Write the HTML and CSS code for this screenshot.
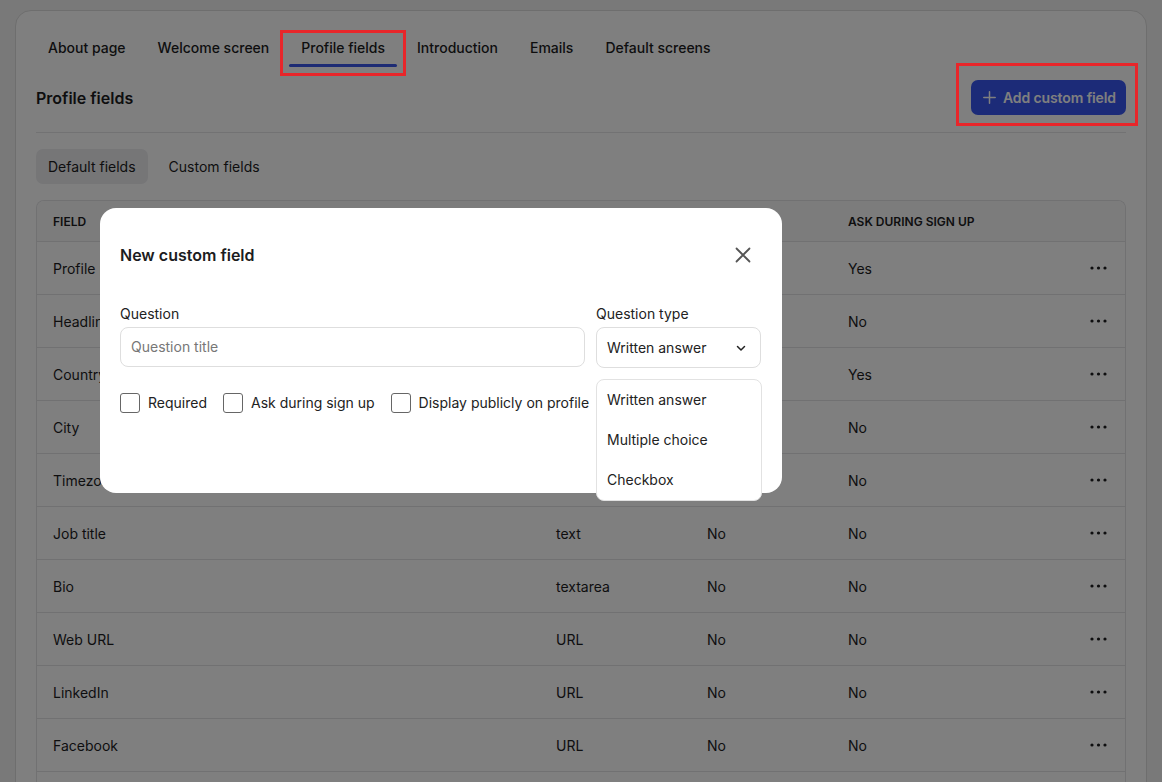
FILE: index.html
```html
<!DOCTYPE html>
<html lang="en">
<head>
<meta charset="utf-8">
<title>Profile fields</title>
<link rel="stylesheet" href="styles.css">
</head>
<body>
<div class="card">
  <nav class="tabs">
    <span class="tab">About page</span>
    <span class="tab">Welcome screen</span>
    <span class="tab active">Profile fields</span>
    <span class="tab">Introduction</span>
    <span class="tab">Emails</span>
    <span class="tab">Default screens</span>
  </nav>
  <div class="section-head">
    <h2 class="section-title">Profile fields</h2>
    <button class="btn-primary">
      <svg class="plus" width="13" height="13" viewBox="0 0 13 13"><path d="M6.5 0.8v11.4M0.8 6.5h11.4" stroke="currentColor" stroke-width="1.5" stroke-linecap="round" fill="none"/></svg>
      Add custom field
    </button>
  </div>
  <div class="subtabs">
    <span class="pill active">Default fields</span>
    <span class="pill">Custom fields</span>
  </div>
  <div class="table">
    <div class="row head">
      <div class="cell">Field</div><div class="cell">Type</div><div class="cell">Required</div><div class="cell">Ask during sign up</div><div class="cell"></div>
    </div>
    <div class="row"><div class="cell">Profile photo</div><div class="cell">image</div><div class="cell">No</div><div class="cell">Yes</div><div class="cell act"><svg width="17" height="4" viewBox="0 0 17 4"><circle cx="2" cy="2" r="1.6"/><circle cx="8.5" cy="2" r="1.6"/><circle cx="15" cy="2" r="1.6"/></svg></div></div>
    <div class="row"><div class="cell">Headline</div><div class="cell">text</div><div class="cell">No</div><div class="cell">No</div><div class="cell act"><svg width="17" height="4" viewBox="0 0 17 4"><circle cx="2" cy="2" r="1.6"/><circle cx="8.5" cy="2" r="1.6"/><circle cx="15" cy="2" r="1.6"/></svg></div></div>
    <div class="row"><div class="cell">Country</div><div class="cell">select</div><div class="cell">No</div><div class="cell">Yes</div><div class="cell act"><svg width="17" height="4" viewBox="0 0 17 4"><circle cx="2" cy="2" r="1.6"/><circle cx="8.5" cy="2" r="1.6"/><circle cx="15" cy="2" r="1.6"/></svg></div></div>
    <div class="row"><div class="cell">City</div><div class="cell">text</div><div class="cell">No</div><div class="cell">No</div><div class="cell act"><svg width="17" height="4" viewBox="0 0 17 4"><circle cx="2" cy="2" r="1.6"/><circle cx="8.5" cy="2" r="1.6"/><circle cx="15" cy="2" r="1.6"/></svg></div></div>
    <div class="row"><div class="cell">Timezone</div><div class="cell">select</div><div class="cell">No</div><div class="cell">No</div><div class="cell act"><svg width="17" height="4" viewBox="0 0 17 4"><circle cx="2" cy="2" r="1.6"/><circle cx="8.5" cy="2" r="1.6"/><circle cx="15" cy="2" r="1.6"/></svg></div></div>
    <div class="row"><div class="cell">Job title</div><div class="cell">text</div><div class="cell">No</div><div class="cell">No</div><div class="cell act"><svg width="17" height="4" viewBox="0 0 17 4"><circle cx="2" cy="2" r="1.6"/><circle cx="8.5" cy="2" r="1.6"/><circle cx="15" cy="2" r="1.6"/></svg></div></div>
    <div class="row"><div class="cell">Bio</div><div class="cell">textarea</div><div class="cell">No</div><div class="cell">No</div><div class="cell act"><svg width="17" height="4" viewBox="0 0 17 4"><circle cx="2" cy="2" r="1.6"/><circle cx="8.5" cy="2" r="1.6"/><circle cx="15" cy="2" r="1.6"/></svg></div></div>
    <div class="row"><div class="cell">Web URL</div><div class="cell">URL</div><div class="cell">No</div><div class="cell">No</div><div class="cell act"><svg width="17" height="4" viewBox="0 0 17 4"><circle cx="2" cy="2" r="1.6"/><circle cx="8.5" cy="2" r="1.6"/><circle cx="15" cy="2" r="1.6"/></svg></div></div>
    <div class="row"><div class="cell">LinkedIn</div><div class="cell">URL</div><div class="cell">No</div><div class="cell">No</div><div class="cell act"><svg width="17" height="4" viewBox="0 0 17 4"><circle cx="2" cy="2" r="1.6"/><circle cx="8.5" cy="2" r="1.6"/><circle cx="15" cy="2" r="1.6"/></svg></div></div>
    <div class="row"><div class="cell">Facebook</div><div class="cell">URL</div><div class="cell">No</div><div class="cell">No</div><div class="cell act"><svg width="17" height="4" viewBox="0 0 17 4"><circle cx="2" cy="2" r="1.6"/><circle cx="8.5" cy="2" r="1.6"/><circle cx="15" cy="2" r="1.6"/></svg></div></div>
    <div class="row"></div>
  </div>
</div>

<div class="overlay"></div>

<div class="modal">
  <div class="modal-head">
    <h3 class="modal-title">New custom field</h3>
    <svg class="close" width="16" height="16" viewBox="0 0 16 16"><path d="M1.5 1.5l13 13M14.5 1.5l-13 13" stroke="currentColor" stroke-width="1.8" stroke-linecap="round" fill="none"/></svg>
  </div>
  <div class="fields">
    <div class="field">
      <label class="label">Question</label>
      <div class="input placeholder">Question title</div>
    </div>
    <div class="field">
      <label class="label">Question type</label>
      <div class="select-wrap">
        <div class="select">
          <span>Written answer</span>
          <svg width="12" height="12" viewBox="0 0 12 12"><path d="M2.5 4.5L6 8l3.5-3.5" stroke="currentColor" stroke-width="1.5" stroke-linecap="round" stroke-linejoin="round" fill="none"/></svg>
        </div>
        <div class="menu">
          <div class="menu-item">Written answer</div>
          <div class="menu-item">Multiple choice</div>
          <div class="menu-item">Checkbox</div>
        </div>
      </div>
    </div>
  </div>
  <div class="checks">
    <span class="check"><span class="box"></span>Required</span>
    <span class="check"><span class="box"></span>Ask during sign up</span>
    <span class="check"><span class="box"></span>Display publicly on profile</span>
  </div>
</div>

<div class="mark mark-tab"></div>
<div class="mark mark-btn"></div>
</body>
</html>
```

FILE: styles.css
```css
* { box-sizing: border-box; }
html, body { margin: 0; padding: 0; }
body {
  background: #f2f2f2;
  font-family: Inter, "Noto Sans", "Liberation Sans", sans-serif;
  color: #1c1c1e;
  height: 782px;
  overflow: hidden;
}
.card {
  margin: 10px 0 0 15px;
  width: 1132px;
  height: 900px;
  background: #fff;
  border: 1px solid #dcdcdc;
  border-radius: 16px;
  padding: 0 20px;
}
.tabs {
  display: flex;
  gap: 8px;
  margin-top: 19px;
}
.tab {
  position: relative;
  font-size: 14px;
  font-weight: 500;
  line-height: 20px;
  padding: 8px 12px 9px;
  color: #1c1c1e;
}
.tab.active::after {
  content: "";
  position: absolute;
  left: 0; right: 0; bottom: 0;
  height: 3px;
  border-radius: 2px;
  background: #3a56e8;
}
.section-head {
  display: flex;
  align-items: center;
  justify-content: space-between;
  padding: 13px 0 17px;
  border-bottom: 1px solid #e4e4e7;
}
.section-title {
  margin: 0;
  font-size: 16px;
  font-weight: 600;
}
.btn-primary {
  display: flex;
  align-items: center;
  gap: 7px;
  height: 35px;
  padding: 0 10px 0 12px;
  border: none;
  border-radius: 7px;
  background: #3856f0;
  color: #fff;
  font-family: inherit;
  font-size: 14px;
  font-weight: 600;
  letter-spacing: -0.1px;
}
.plus { display: block; }
.subtabs {
  display: flex;
  gap: 9px;
  margin-top: 16px;
}
.pill {
  height: 35px;
  line-height: 35px;
  padding: 0 12px;
  font-size: 14px;
  border-radius: 7px;
}
.pill.active { background: #ececef; }
.table {
  margin-top: 16px;
  border: 1px solid #e2e2e5;
  border-bottom: none;
  border-radius: 8px 8px 0 0;
  overflow: hidden;
}
.row {
  display: grid;
  grid-template-columns: 503px 151px 141px 1fr 80px;
  height: 53px;
  align-items: center;
  border-top: 1px solid #e2e2e5;
  font-size: 14px;
}
.row.head {
  border-top: none;
  height: 40px;
  background: #f8f8f9;
  font-size: 12px;
  font-weight: 600;
  text-transform: uppercase;
}
.cell { padding-left: 16px; }
.cell.act {
  display: flex;
  justify-content: flex-end;
  padding-right: 18px;
}
.cell.act svg { fill: #1c1c1e; display: block; }

.overlay {
  position: fixed;
  inset: 0;
  background: rgba(0, 0, 0, 0.5);
}
.modal {
  position: absolute;
  left: 100px;
  top: 208px;
  width: 682px;
  height: 285px;
  background: #fff;
  border-radius: 16px;
  padding: 0 21px 0 20px;
}
.modal-head {
  display: flex;
  justify-content: space-between;
  align-items: flex-start;
  padding-top: 36px;
  height: 96px;
}
.modal-title {
  margin: 0;
  font-size: 16px;
  font-weight: 600;
  line-height: 22px;
  color: #1c1c1e;
}
.close {
  color: #555;
  margin-top: 3px;
  margin-right: 10px;
}
.fields {
  display: grid;
  grid-template-columns: 1fr 165px;
  gap: 11px;
}
.label {
  display: block;
  font-size: 14px;
  line-height: 20px;
  margin-bottom: 3px;
  color: #222;
}
.input {
  height: 40px;
  border: 1px solid #dedede;
  border-radius: 8px;
  padding: 0 10px;
  font-size: 14px;
  line-height: 38px;
}
.placeholder { color: #777; }
.select-wrap { position: relative; }
.select {
  height: 41px;
  border: 1px solid #dedede;
  border-radius: 8px;
  padding: 0 13px 0 10px;
  display: flex;
  align-items: center;
  justify-content: space-between;
  font-size: 14px;
  color: #222;
}
.menu {
  position: absolute;
  left: 0;
  top: 52px;
  width: 166px;
  background: #fff;
  border: 1px solid #e2e2e2;
  border-radius: 8px;
  z-index: 5;
}
.menu-item {
  height: 40px;
  line-height: 40px;
  padding-left: 10px;
  font-size: 14px;
  color: #222;
}
.checks {
  display: flex;
  gap: 16px;
  margin-top: 25px;
}
.check {
  display: flex;
  align-items: center;
  gap: 8px;
  font-size: 14px;
  line-height: 20px;
  color: #222;
}
.box {
  width: 20px;
  height: 20px;
  border: 1.5px solid #666;
  border-radius: 3px;
}
.mark {
  position: absolute;
  border: 3px solid #e8262a;
}
.mark-tab { left: 280px; top: 30px; width: 126px; height: 46px; }
.mark-btn { left: 956px; top: 63px; width: 182px; height: 63px; }
```
